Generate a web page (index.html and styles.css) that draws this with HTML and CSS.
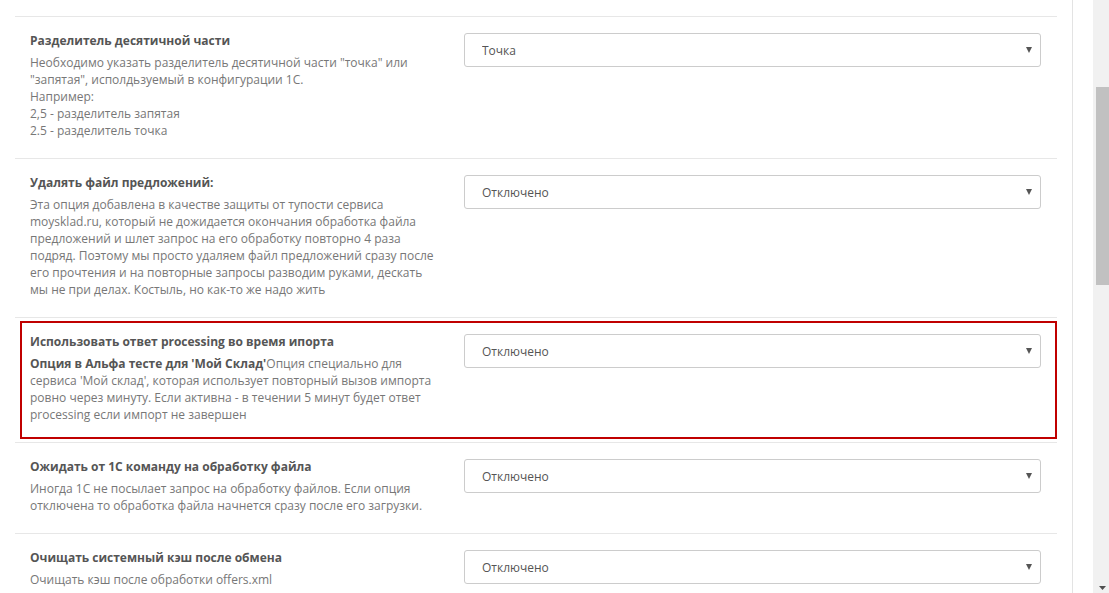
FILE: index.html
```html
<!DOCTYPE html>
<html lang="ru">
<head>
    <meta charset="UTF-8">
    <meta name="viewport" content="width=device-width, initial-scale=1.0">
    <title>Настройки обмена</title>
    <link rel="stylesheet" href="styles.css">
</head>
<body>
    <div class="page">
        <div class="panel">
            <div class="option">
                <div class="option-info">
                    <div class="option-title">Разделитель десятичной части</div>
                    <div class="option-desc">Необходимо указать разделитель десятичной части "точка" или "запятая", исполдьзуемый в конфигурации 1С.<br>Например:<br>2,5 - разделитель запятая<br>2.5 - разделитель точка</div>
                </div>
                <div class="option-control">
                    <div class="select-wrap">
                        <select class="select">
                            <option>Точка</option>
                            <option>Запятая</option>
                        </select>
                        <svg class="select-arrow" width="6" height="6" viewBox="0 0 6 6"><path d="M0 0h6L3 6z" fill="#555"/></svg>
                    </div>
                </div>
            </div>

            <div class="option">
                <div class="option-info">
                    <div class="option-title">Удалять файл предложений:</div>
                    <div class="option-desc">Эта опция добавлена в качестве защиты от тупости сервиса moysklad.ru, который не дожидается окончания обработка файла предложений и шлет запрос на его обработку повторно 4 раза подряд. Поэтому мы просто удаляем файл предложений сразу после его прочтения и на повторные запросы разводим руками, дескать мы не при делах. Костыль, но как-то же надо жить</div>
                </div>
                <div class="option-control">
                    <div class="select-wrap">
                        <select class="select">
                            <option>Отключено</option>
                            <option>Включено</option>
                        </select>
                        <svg class="select-arrow" width="6" height="6" viewBox="0 0 6 6"><path d="M0 0h6L3 6z" fill="#555"/></svg>
                    </div>
                </div>
            </div>

            <div class="option option-alpha">
                <div class="option-frame">
                    <div class="option-info">
                        <div class="option-title">Использовать ответ processing во время ипорта</div>
                        <div class="option-desc"><b>Опция в Альфа тесте для 'Мой Склад'</b>Опция специально для сервиса 'Мой склад', которая использует повторный вызов импорта ровно через минуту. Если активна - в течении 5 минут будет ответ processing если импорт не завершен</div>
                    </div>
                    <div class="option-control">
                        <div class="select-wrap">
                            <select class="select">
                                <option>Отключено</option>
                                <option>Включено</option>
                            </select>
                            <svg class="select-arrow" width="6" height="6" viewBox="0 0 6 6"><path d="M0 0h6L3 6z" fill="#555"/></svg>
                        </div>
                    </div>
                </div>
            </div>

            <div class="option">
                <div class="option-info">
                    <div class="option-title">Ожидать от 1С команду на обработку файла</div>
                    <div class="option-desc">Иногда 1С не посылает запрос на обработку файлов. Если опция отключена то обработка файла начнется сразу после его загрузки.</div>
                </div>
                <div class="option-control">
                    <div class="select-wrap">
                        <select class="select">
                            <option>Отключено</option>
                            <option>Включено</option>
                        </select>
                        <svg class="select-arrow" width="6" height="6" viewBox="0 0 6 6"><path d="M0 0h6L3 6z" fill="#555"/></svg>
                    </div>
                </div>
            </div>

            <div class="option">
                <div class="option-info">
                    <div class="option-title">Очищать системный кэш после обмена</div>
                    <div class="option-desc">Очищать кэш после обработки offers.xml</div>
                </div>
                <div class="option-control">
                    <div class="select-wrap">
                        <select class="select">
                            <option>Отключено</option>
                            <option>Включено</option>
                        </select>
                        <svg class="select-arrow" width="6" height="6" viewBox="0 0 6 6"><path d="M0 0h6L3 6z" fill="#555"/></svg>
                    </div>
                </div>
            </div>
        </div>
    </div>

    <div class="scrollbar">
        <div class="scrollbar-thumb"></div>
        <div class="scrollbar-down">
            <svg width="7" height="4" viewBox="0 0 7 4"><path d="M0 0h7L3.5 4z" fill="#505050"/></svg>
        </div>
    </div>
</body>
</html>
```

FILE: styles.css
```css
* {
    box-sizing: border-box;
    margin: 0;
    padding: 0;
}

html, body {
    height: 100%;
}

body {
    display: flex;
    overflow: hidden;
    background: #fff;
    font-family: 'Open Sans', 'Noto Sans', sans-serif;
    font-size: 12px;
    color: #777;
}

.page {
    flex: 1;
    overflow: hidden;
}

.panel {
    width: 1073px;
    height: 100%;
    padding-top: 16px;
    border-right: 1px solid #e3e3e3;
}

.option {
    display: flex;
    width: 1042px;
    margin-left: 15px;
    padding: 15px 16px 19px 15px;
    border-top: 1px solid #e7e7e7;
}

.option-alpha {
    padding: 3px 0 3px 5px;
}

.option-frame {
    display: flex;
    flex: 1;
    padding: 10px 14px 14px 8px;
    border: 2px solid #c00000;
}

.option-info {
    width: 434px;
    flex-shrink: 0;
    padding-right: 24px;
}

.option-title {
    font-weight: 700;
    line-height: 18px;
    color: #555;
}

.option-desc {
    margin-top: 4px;
    line-height: 17px;
}

.option-desc b {
    color: #555;
}

.option-control {
    width: 577px;
    flex-shrink: 0;
    padding-top: 1px;
}

.select-wrap {
    position: relative;
}

.select {
    display: block;
    width: 100%;
    height: 34px;
    padding: 0 30px 0 17px;
    border: 1px solid #ccc;
    border-radius: 3px;
    background: #fff;
    font-family: inherit;
    font-size: 12px;
    color: #555;
    -webkit-appearance: none;
    appearance: none;
    outline: none;
}

.select-arrow {
    position: absolute;
    top: 14px;
    right: 9px;
    pointer-events: none;
}

.scrollbar {
    width: 16px;
    margin-left: 20px;
    background: #f1f1f1;
    display: flex;
    flex-direction: column;
    align-items: center;
}

.scrollbar-thumb {
    width: 13px;
    height: 198px;
    margin-top: 87px;
    margin-left: 3px;
    background: #c1c1c1;
}

.scrollbar-down {
    margin-top: auto;
    margin-left: 2px;
    padding-bottom: 3px;
    line-height: 0;
}
```
